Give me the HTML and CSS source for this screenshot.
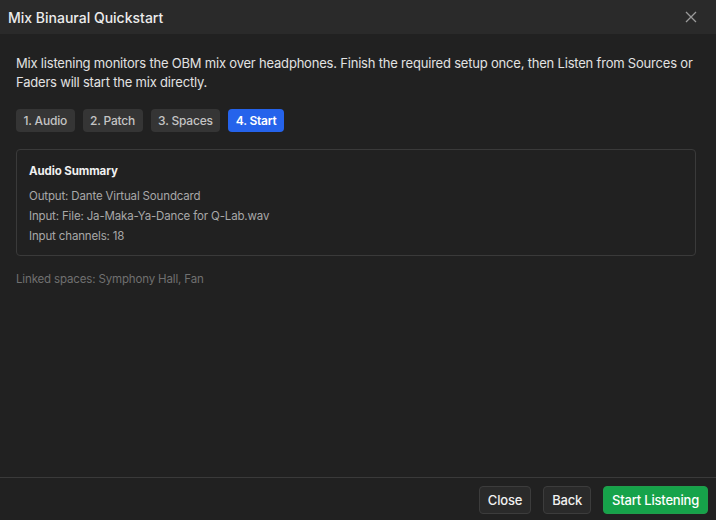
FILE: index.html
```html
<!DOCTYPE html>
<html lang="en">

<head>
  <meta charset="UTF-8">
  <meta name="viewport" content="width=device-width, initial-scale=1.0">
  <title>Mix Binaural Quickstart</title>
  <link rel="stylesheet" href="styles.css">
</head>

<body>
  <div class="dialog">
    <header class="dialog-head">
      <h2>Mix Binaural Quickstart</h2>
      <button class="close-x" aria-label="Close">
        <svg width="12" height="12" viewBox="0 0 12 12">
          <path d="M1 1 L11 11 M11 1 L1 11" stroke="#9a9a9a" stroke-width="1.3" fill="none" />
        </svg>
      </button>
    </header>

    <section class="dialog-body">
      <p class="intro">
        Mix listening monitors the OBM mix over headphones. Finish the required setup once, then Listen from Sources or
        Faders will start the mix directly.
      </p>

      <div class="steps">
        <button class="step">1. Audio</button>
        <button class="step">2. Patch</button>
        <button class="step">3. Spaces</button>
        <button class="step active">4. Start</button>
      </div>

      <div class="summary">
        <h3>Audio Summary</h3>
        <p>Output: Dante Virtual Soundcard</p>
        <p>Input: File: Ja-Maka-Ya-Dance for Q-Lab.wav</p>
        <p>Input channels: 18</p>
      </div>

      <p class="linked">Linked spaces: Symphony Hall, Fan</p>
    </section>

    <footer class="dialog-foot">
      <button class="btn">Close</button>
      <button class="btn">Back</button>
      <button class="btn primary">Start Listening</button>
    </footer>
  </div>
</body>

</html>
```

FILE: styles.css
```css
* {
  box-sizing: border-box;
}

html,
body {
  margin: 0;
  height: 100%;
}

body {
  background: #212121;
  color: #e6e6e6;
  font-family: Inter, "Noto Sans", sans-serif;
  letter-spacing: -0.2px;
}

button {
  font-family: inherit;
  letter-spacing: inherit;
  cursor: pointer;
}

.dialog {
  display: flex;
  flex-direction: column;
  height: 520px;
}

.dialog-head {
  display: flex;
  align-items: center;
  justify-content: space-between;
  height: 34px;
  padding: 0 8px;
  background: #2a2a2a;
}

.dialog-head h2 {
  margin: 0;
  font-size: 14px;
  font-weight: 500;
  color: #ececec;
  letter-spacing: 0;
}

.close-x {
  display: flex;
  padding: 0;
  margin-right: 11px;
  border: 0;
  background: none;
}

.dialog-body {
  flex: 1;
  padding: 20px 20px 0 16px;
}

.intro {
  margin: 0;
  font-size: 13px;
  line-height: 19px;
  color: #e2e2e2;
}

.steps {
  display: flex;
  gap: 8px;
  margin-top: 17px;
}

.step {
  height: 23px;
  padding: 0 7.5px;
  border: 0;
  border-radius: 4px;
  background: #353535;
  color: #c4c4c4;
  font-size: 12px;
  font-weight: 500;
}

.step.active {
  background: #2563eb;
  color: #fff;
  font-weight: 600;
}

.summary {
  margin-top: 17px;
  padding: 12px 12px 9px;
  border: 1px solid #3a3a3a;
  border-radius: 4px;
}

.summary h3 {
  margin: 0 0 6px;
  font-size: 11.5px;
  font-weight: 700;
  color: #f0f0f0;
  line-height: 18px;
  letter-spacing: -0.1px;
}

.summary p {
  margin: 0;
  font-size: 11.5px;
  line-height: 20px;
  color: #a8a8a8;
  letter-spacing: -0.15px;
}

.linked {
  margin: 16px 0 0;
  font-size: 11.5px;
  color: #707070;
  letter-spacing: -0.15px;
}

.dialog-foot {
  display: flex;
  justify-content: flex-end;
  gap: 12px;
  height: 43px;
  padding: 8px 8px 0;
  border-top: 1px solid #3a3a3a;
}

.btn {
  height: 28px;
  padding: 0 8px;
  border: 1px solid #3c3c3c;
  border-radius: 4px;
  background: #2a2a2a;
  color: #f0f0f0;
  font-size: 13px;
  font-weight: 500;
}

.btn.primary {
  border-color: #1f9e4b;
  background: #16a34a;
  color: #fff;
}
```
